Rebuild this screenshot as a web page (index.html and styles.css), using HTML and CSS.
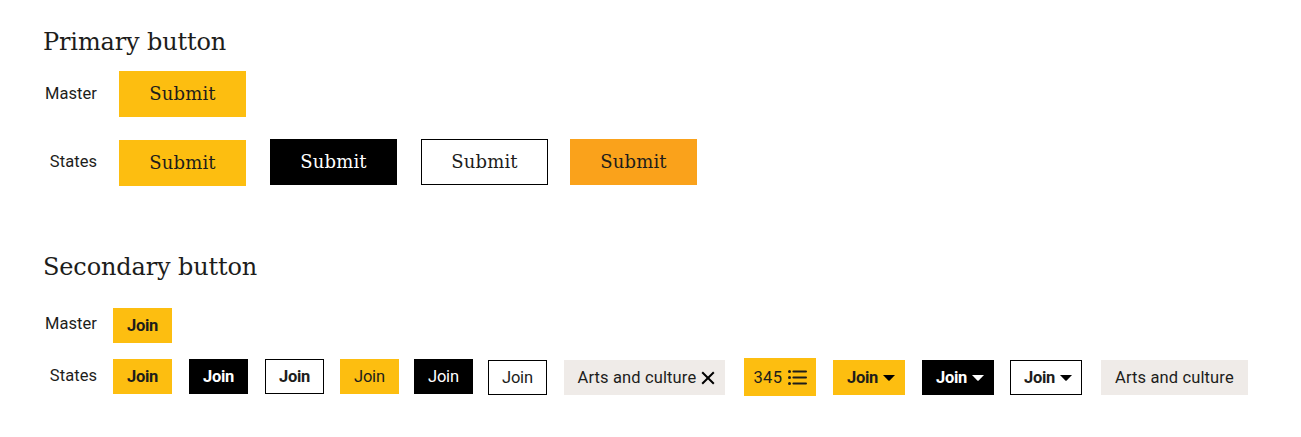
FILE: index.html
```html
<!DOCTYPE html>
<html lang="en">
<head>
<meta charset="utf-8">
<title>Buttons</title>
<link rel="stylesheet" href="styles.css">
</head>
<body>
<main class="sheet">
  <section class="group primary">
    <h2 class="title">Primary button</h2>
    <div class="row">
      <span class="label">Master</span>
      <button class="btn large yellow">Submit</button>
    </div>
    <div class="row states">
      <span class="label">States</span>
      <button class="btn large yellow lower">Submit</button>
      <button class="btn large black gap-24">Submit</button>
      <button class="btn large outline gap-24">Submit</button>
      <button class="btn large orange gap-22">Submit</button>
    </div>
  </section>
  <section class="group secondary">
    <h2 class="title">Secondary button</h2>
    <div class="row">
      <span class="label">Master</span>
      <button class="btn small bold yellow">Join</button>
    </div>
    <div class="row states">
      <span class="label">States</span>
      <button class="btn small bold yellow">Join</button>
      <button class="btn small bold black gap-17">Join</button>
      <button class="btn small bold outline gap-17">Join</button>
      <button class="btn small yellow gap-16">Join</button>
      <button class="btn small black gap-15">Join</button>
      <button class="btn small outline gap-15 lower">Join</button>
      <button class="btn small tag closable gap-17 lower">Arts and culture<svg class="close" width="14" height="14" viewBox="0 0 14 14"><path d="M1.2 1.2 12.8 12.8M12.8 1.2 1.2 12.8"/></svg></button>
      <button class="btn small count yellow gap-19">345<svg class="list" width="19" height="15" viewBox="0 0 19 15"><circle cx="1.5" cy="1.6" r="1.5"/><circle cx="1.5" cy="7.5" r="1.5"/><circle cx="1.5" cy="13.4" r="1.5"/><path d="M5.4 1.6H18M5.4 7.5H18M5.4 13.4H18"/></svg></button>
      <button class="btn small bold menu yellow gap-17 lower">Join<svg class="caret" width="12" height="6" viewBox="0 0 12 6"><path d="M0 0H12L6.7 5.5Q6 6.1 5.3 5.5Z"/></svg></button>
      <button class="btn small bold menu black gap-17 lower">Join<svg class="caret" width="12" height="6" viewBox="0 0 12 6"><path d="M0 0H12L6.7 5.5Q6 6.1 5.3 5.5Z"/></svg></button>
      <button class="btn small bold menu outline gap-16 lower">Join<svg class="caret" width="12" height="6" viewBox="0 0 12 6"><path d="M0 0H12L6.7 5.5Q6 6.1 5.3 5.5Z"/></svg></button>
      <button class="btn small tag gap-19 lower">Arts and culture</button>
    </div>
  </section>
</main>
</body>
</html>
```
FILE: styles.css
```css
* { box-sizing: border-box; }
body { margin: 0; background: #fff; color: #1d1d1b; }
.sheet { width: 1301px; height: 437px; padding: 26px 0 0 43px; overflow: hidden; }
.title {
  margin: 0;
  height: 32px;
  font: 400 24px/32px "DejaVu Serif", serif;
  letter-spacing: -0.14px;
  white-space: nowrap;
}
.row { display: flex; align-items: flex-start; }
.label {
  width: 54px;
  text-align: right;
  font: 400 16.5px/20px Roboto, sans-serif;
  letter-spacing: 0.05px;
}
.btn {
  display: flex;
  flex: none;
  align-items: center;
  margin: 0;
  padding: 0;
  border: 0;
  border-radius: 0;
  color: #1d1d1b;
  white-space: nowrap;
}
.large {
  justify-content: center;
  width: 127px;
  height: 46px;
  font: 400 18px/24px "DejaVu Serif", serif;
  letter-spacing: 0.15px;
}
.small {
  width: 59px;
  height: 35px;
  padding-left: 14px;
  font: 400 16.5px/20px Roboto, sans-serif;
  letter-spacing: -0.2px;
}
.bold { font-weight: 700; letter-spacing: -0.3px; }
.yellow { background: #fdbe10; }
.orange { background: #faa21b; }
.black { background: #000; color: #fff; }
.outline { background: #fff; border: 1px solid #000; }
.small.outline { padding-left: 13px; }
.lower { margin-top: 1px; }

.primary .row { margin-top: 13px; }
.primary .states { margin-top: 22px; }
.primary .label { margin: 13px 22px 0 0; }
.secondary { margin-top: 65px; }
.secondary .row { margin-top: 25px; }
.secondary .states { margin-top: 15px; }
.secondary .label { margin: 6px 16px 0 0; }
.secondary .states .label { margin-top: 8px; }
.secondary .states .btn { margin-top: 1px; }
.secondary .states .lower { margin-top: 2px; }
.secondary .states .count { margin-top: 0; }

.tag { width: 147px; background: #efebe8; letter-spacing: 0.13px; }
.closable { width: 161px; padding-left: 13.5px; }
.count { width: 72px; height: 38px; padding: 2px 0 0 9.5px; letter-spacing: 0.3px; }
.menu { width: 72px; }
.close { margin: 1px 0 0 5px; fill: none; stroke: #000; stroke-width: 2; }
.list { margin: -1px 0 0 5.5px; fill: #1d1d1b; stroke: none; }
.list path { stroke: #1d1d1b; stroke-width: 2; stroke-linecap: round; }
.caret { margin: 1px 0 0 5px; fill: currentColor; }
.yellow .caret, .outline .caret { fill: #000; }

.gap-15 { margin-left: 15px; }
.gap-16 { margin-left: 16px; }
.gap-17 { margin-left: 17px; }
.gap-19 { margin-left: 19px; }
.gap-22 { margin-left: 22px; }
.gap-24 { margin-left: 24px; }
```
